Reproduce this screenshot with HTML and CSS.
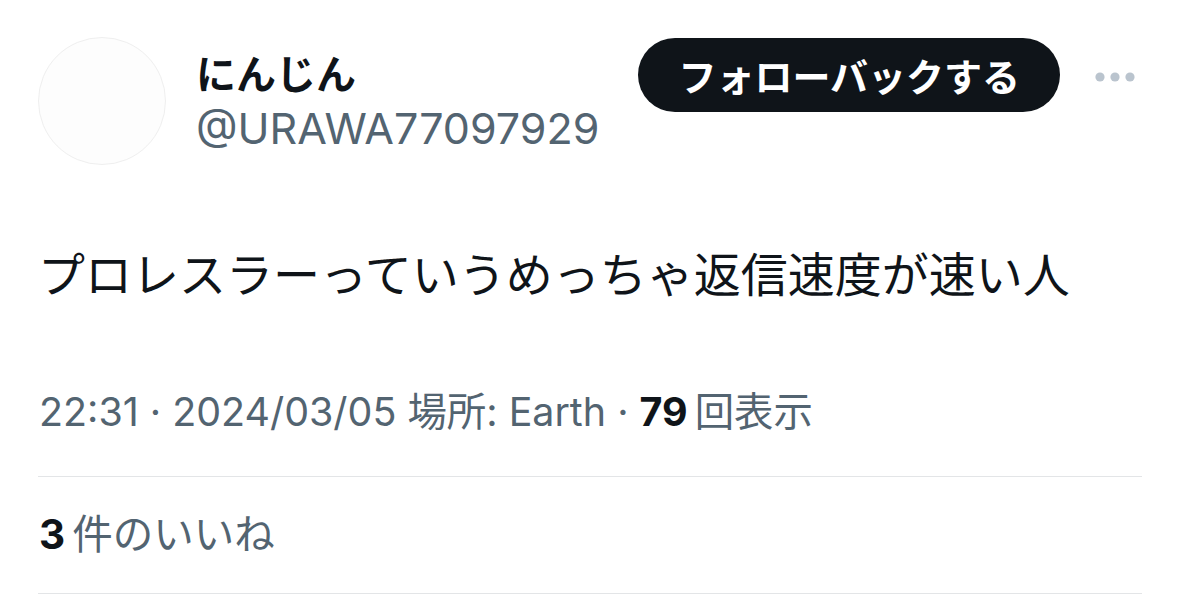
FILE: index.html
```html
<!DOCTYPE html>
<html lang="ja">
<head>
<meta charset="utf-8">
<title>にんじん</title>
<link rel="stylesheet" href="styles.css">
</head>
<body>
<main class="tweet">
  <header class="head">
    <div class="avatar"></div>
    <div class="names">
      <div class="name">にんじん</div>
      <div class="handle">@URAWA77097929</div>
    </div>
    <button class="follow">フォローバックする</button>
    <div class="more">
      <svg width="40" height="10" viewBox="0 0 40 10"><circle cx="5" cy="5" r="4.6" fill="#bac4ce"/><circle cx="20" cy="5" r="4.6" fill="#bac4ce"/><circle cx="35" cy="5" r="4.6" fill="#bac4ce"/></svg>
    </div>
  </header>
  <p class="text">プロレスラーっていうめっちゃ返信速度が速い人</p>
  <div class="meta">22:31 · 2024/03/05 場所: Earth · <b>79</b><span class="unit">回表示</span></div>
  <div class="likes"><b>3</b><span class="unit">件のいいね</span></div>
</main>
</body>
</html>
```
FILE: styles.css
```css
html, body {
  margin: 0;
  padding: 0;
  background: #ffffff;
}
body {
  font-family: "Inter", "Noto Sans CJK JP", sans-serif;
  color: #0f1419;
}
.tweet {
  padding: 0 36px 0 38px;
}
.head {
  display: flex;
  align-items: flex-start;
  padding-top: 37px;
  height: 128px;
}
.avatar {
  width: 126px;
  height: 126px;
  border-radius: 50%;
  border: 1px solid #efefef;
  background: #fdfdfd;
  flex: none;
}
.names {
  margin-left: 30px;
  padding-top: 16px;
}
.name {
  font-size: 40px;
  line-height: 44px;
  font-weight: 700;
  color: #0f1419;
}
.handle {
  margin-top: 7px;
  font-size: 43px;
  line-height: 48px;
  color: #536471;
}
.follow {
  margin-left: auto;
  margin-top: 1px;
  height: 74px;
  padding: 0 40px;
  border: none;
  border-radius: 37px;
  background: #0f1419;
  color: #ffffff;
  font-family: "Noto Sans CJK JP", sans-serif;
  font-size: 38px;
  font-weight: 700;
  line-height: 74px;
}
.more {
  margin-left: 35px;
  margin-right: 7px;
  margin-top: 35px;
  display: flex;
}
.text {
  margin: 77px 0 0 0;
  font-family: "Noto Sans CJK JP", sans-serif;
  font-size: 47px;
  line-height: 60px;
  color: #0f1419;
}
.meta {
  margin-top: 85px;
  padding-left: 1px;
  font-size: 39.4px;
  line-height: 50px;
  height: 50px;
  color: #536471;
  padding-bottom: 39px;
  border-bottom: 1px solid #e3e5e7;
}
.meta b, .likes b {
  color: #0f1419;
  font-weight: 700;
}
.unit {
  margin-left: 7px;
}
.likes {
  height: 116px;
  line-height: 116px;
  padding-left: 1px;
  font-size: 40.5px;
  color: #536471;
  border-bottom: 1px solid #e3e5e7;
}
```
